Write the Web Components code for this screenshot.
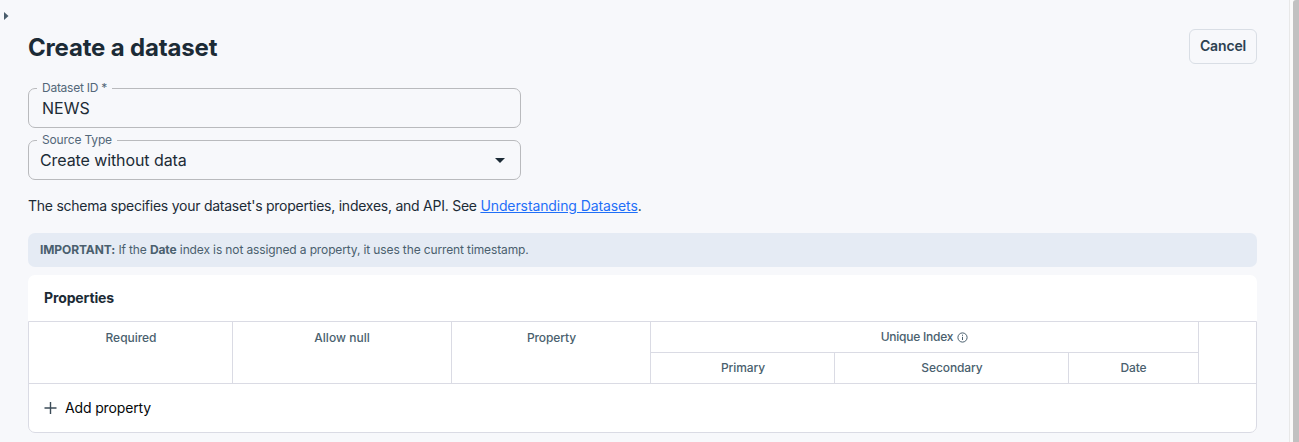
<!DOCTYPE html>
<html lang="en">
<head>
<meta charset="utf-8">
<title>Create a dataset</title>
<style>
html, body { margin: 0; height: 100%; overflow: hidden; }
body { background: #f7f8fb; color: #1c2b36; font-family: Inter, "Open Sans", sans-serif; }
</style>
</head>
<body>
<app-shell>
  <page-header heading="Create a dataset"><outline-button slot="action">Cancel</outline-button></page-header>
  <outlined-field label="Dataset ID *" notch="75"><span style="letter-spacing:.05px">NEWS</span></outlined-field>
  <outlined-field label="Source Type" notch="80" select>Create without data</outlined-field>
  <schema-intro></schema-intro>
  <info-banner></info-banner>
  <properties-card></properties-card>
</app-shell>
<script>
const define = (name, html, setup) => {
  customElements.define(name, class extends HTMLElement {
    constructor() {
      super();
      this.attachShadow({ mode: 'open' }).innerHTML = html;
    }
    connectedCallback() { if (setup) setup(this, this.shadowRoot); }
  });
};

define('app-shell', `
<style>
:host { display: flex; height: 442px; overflow: hidden; }
.rail { width: 28px; flex: none; box-sizing: border-box; padding: 12px 0 0 4px; }
svg { display: block; }
main { width: 1229px; flex: none; display: flex; flex-direction: column; }
.space { flex: 1; }
.track { width: 10px; flex: none; box-sizing: border-box; border-left: 1px solid #e8e8e8; background: #fafafa; padding-left: 3px; }
.thumb { height: 460px; background: #c1c1c1; border-radius: 3px 0 0 0; }
</style>
<div class="rail"><svg width="5" height="8" viewBox="0 0 5 8"><path d="M0 0L4.5 4L0 8Z" fill="#4a5d6c"/></svg></div>
<main><slot></slot></main>
<div class="space"></div>
<div class="track"><div class="thumb"></div></div>`);

define('page-header', `
<style>
:host { display: flex; justify-content: space-between; align-items: flex-start; padding-top: 29px; height: 59px; flex: none; box-sizing: content-box; }
h1 { margin: 0; padding-top: 1px; font-size: 24px; line-height: 36px; font-weight: 700; letter-spacing: -.17px; }
</style>
<h1></h1><slot name="action"></slot>`, (el, r) => { r.querySelector('h1').textContent = el.getAttribute('heading'); });

define('outline-button', `
<style>
:host { display: flex; align-items: center; justify-content: center; box-sizing: border-box; width: 68px; height: 35px; padding-bottom: 2px; border: 1px solid #d9dee5; border-radius: 6px; font-size: 14px; font-weight: 600; letter-spacing: -.16px; color: #2c4150; }
</style>
<span><slot></slot></span>`);

define('outlined-field', `
<style>
:host { display: block; width: 493px; height: 40px; margin-bottom: 12px; flex: none; }
.box { position: relative; box-sizing: border-box; height: 40px; border: 1px solid #b9babd; border-radius: 7px; display: flex; align-items: center; padding: 0 13px; font-size: 16px; line-height: 24px; }
:host([select]) .box { padding-left: 11px; letter-spacing: -.09px; }
label { position: absolute; left: 8px; top: -9px; height: 16px; padding: 0 5px; box-sizing: border-box; background: #f7f8fb; font-size: 12px; line-height: 16px; letter-spacing: -.15px; color: #536779; white-space: nowrap; }
.value { flex: 1; }
svg { display: none; margin-right: 2px; }
:host([select]) svg { display: block; }
</style>
<div class="box"><label></label><span class="value"><slot></slot></span><svg width="10" height="5" viewBox="0 0 10 5"><path d="M0 0H10L5 5Z" fill="#1c2b36"/></svg></div>`, (el, r) => {
  const label = r.querySelector('label');
  label.textContent = el.getAttribute('label');
  label.style.width = el.getAttribute('notch') + 'px';
  if (!el.hasAttribute('select')) label.style.letterSpacing = '-.26px';
});

define('schema-intro', `
<style>
:host { display: block; height: 20px; margin: 4px 0 17px; font-size: 14px; line-height: 20px; letter-spacing: -.249px; white-space: nowrap; flex: none; }
a { color: #1f6ff8; text-decoration: underline; letter-spacing: -.1px; }
</style>
The schema specifies your dataset's properties, indexes, and API. See <a>Understanding Datasets</a>.`);

define('info-banner', `
<style>
:host { display: block; box-sizing: border-box; height: 34px; padding: 0 12px; background: #e5ebf4; border-radius: 7px; font-size: 12px; line-height: 34px; letter-spacing: -.125px; color: #4a5f6e; flex: none; }
b { font-weight: 700; letter-spacing: -.1px; }
</style>
<b>IMPORTANT:</b> If the <b>Date</b> index is not assigned a property, it uses the current timestamp.`);

define('properties-card', `
<style>
:host { display: block; margin-top: 8px; height: 158px; background: #fff; border-radius: 7px; flex: none; }
h2 { margin: 0; height: 46px; padding-left: 16px; font-size: 14px; line-height: 46px; font-weight: 650; letter-spacing: -.12px; }
.frame { box-sizing: border-box; height: 112px; border: 1px solid #dadbe4; border-radius: 0 0 7px 7px; }
.grid { display: grid; grid-template-columns: 204px 219px 199px 184px 234px 130px 1fr; grid-template-rows: 31px 31px; }
.grid > div { box-sizing: border-box; padding-left: 1px; border-right: 1px solid #dadbe4; border-bottom: 1px solid #dadbe4; font-size: 12px; line-height: 30px; font-weight: 500; color: #4a5f6e; text-align: center; letter-spacing: -.1px; }
.grid > .tall { grid-row: span 2; line-height: 32px; }
.grid > .wide { grid-column: span 3; display: flex; align-items: center; justify-content: center; gap: 4px; padding-left: 0; letter-spacing: -.23px; }
.grid > .last { border-right: 0; }
.add { display: flex; align-items: center; height: 48px; padding-left: 15px; gap: 8px; color: #05080a; font-size: 14px; font-weight: 400; letter-spacing: -.14px; }
.add span { padding-bottom: 1px; }
</style>
<h2>Properties</h2>
<div class="frame">
  <div class="grid">
    <div class="tall" style="letter-spacing:-.04px">Required</div>
    <div class="tall" style="letter-spacing:.02px;padding-left:0">Allow null</div>
    <div class="tall">Property</div>
    <div class="wide"><span>Unique Index</span><svg width="11" height="11" viewBox="0 0 11 11" fill="none" stroke="#4a5f6e"><circle cx="5.5" cy="5.5" r="4.6"/><path d="M5.5 4.8V8M5.5 2.7V3.8"/></svg></div>
    <div class="tall last"></div>
    <div>Primary</div>
    <div>Secondary</div>
    <div style="padding-left:0">Date</div>
  </div>
  <div class="add"><svg width="13" height="12" viewBox="0 0 13 12"><path d="M6.5 0V12M.5 6H12.5" stroke="#3c4c58" stroke-width="1.4"/></svg><span>Add property</span></div>
</div>`);
</script>
</body>
</html>
